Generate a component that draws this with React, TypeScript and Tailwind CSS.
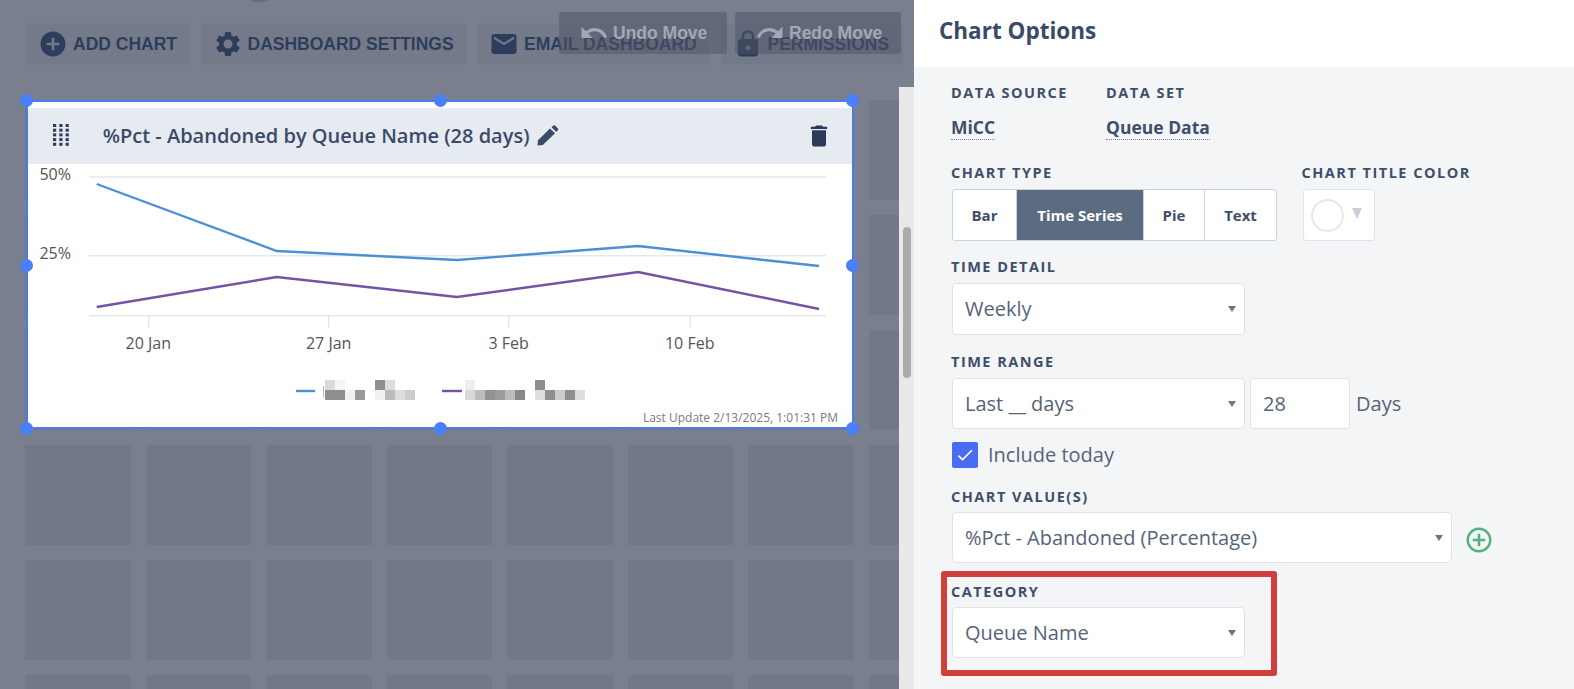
import { MdAddCircle, MdSettings, MdEmail, MdLock, MdUndo, MdRedo, MdDelete, MdCheck, MdAddCircleOutline } from 'react-icons/md';

const FONT = "font-['Open_Sans','Noto_Sans',sans-serif]";
const CELLS = Array.from({ length: 48 });

const TOOLBAR = [
  { label: 'ADD CHART', icon: MdAddCircle, width: 'w-[164px]' },
  { label: 'DASHBOARD SETTINGS', icon: MdSettings, width: 'w-[266px]' },
  { label: 'EMAIL DASHBOARD', icon: MdEmail, width: 'w-[233px]' },
  { label: 'PERMISSIONS', icon: MdLock, width: 'w-[182px]' },
];

// pixelated legend labels: x, y, colour
const LEGEND_BLOCKS: [number, number, string][] = [
  [325, 380, '#dadada'], [335, 380, '#f4f4f4'],
  [325, 390, '#8f8f8f'], [335, 390, '#8f8f8f'], [345, 390, '#f0f0f0'], [355, 390, '#999999'],
  [375, 380, '#8f8f8f'], [385, 380, '#dddddd'],
  [375, 390, '#f0f0f0'], [385, 390, '#bcbcbc'], [395, 390, '#dddddd'], [405, 390, '#cccccc'],
  [465, 380, '#eeeeee'],
  [465, 390, '#d8d8d8'], [475, 390, '#bcbcbc'], [485, 390, '#939393'], [495, 390, '#9c9c9c'], [505, 390, '#bcbcbc'], [515, 390, '#888888'],
  [535, 380, '#8f8f8f'],
  [535, 390, '#dddddd'], [545, 390, '#8f8f8f'], [555, 390, '#cccccc'], [565, 390, '#8f8f8f'], [575, 390, '#dddddd'],
];

const HANDLES = [
  'left-[-7.5px] top-[-7.5px]', 'left-[406.8px] top-[-7.5px]', 'right-[-7.5px] top-[-7.5px]',
  'left-[-7.5px] top-[157.8px]', 'right-[-7.5px] top-[157.8px]',
  'left-[-7.5px] bottom-[-7.5px]', 'left-[406.8px] bottom-[-7.5px]', 'right-[-7.5px] bottom-[-7.5px]',
];

function Label({ children }: { children: string }) {
  return <div className="-ml-[1px] text-[14.5px] leading-[20px] font-bold tracking-[1.5px] text-[#3f4f6b]">{children}</div>;
}

function Select({ value, width }: { value: string; width: string }) {
  return (
    <div className={`${width} h-[51.5px] shrink-0 flex items-center justify-between pl-[12px] pr-[8px] bg-white border border-[#dfe3e9] rounded-[4px] text-[20px] text-[#56637a]`}>
      <span>{value}</span>
      <span className="w-0 h-0 border-x-[4.5px] border-x-transparent border-t-[6px] border-t-[#6f7680]" />
    </div>
  );
}

function Segment({ label, width, active }: { label: string; width: string; active?: boolean }) {
  return (
    <div className={`${width} flex items-center justify-center text-[15px] font-bold border-r border-[#ccd2da] last:border-r-0 ${active ? 'bg-[#5b6b80] text-white' : 'text-[#3f4f6b]'}`}>
      {label}
    </div>
  );
}

function Chart() {
  return (
    <svg className="absolute left-[-27.7px] top-[-101.7px]" width="860" height="440" viewBox="0 0 860 440">
      <g stroke="#e6e7ec" strokeWidth="1.5">
        <line x1="89" y1="177" x2="826" y2="177" />
        <line x1="89" y1="255.7" x2="826" y2="255.7" />
        <line x1="89" y1="315.7" x2="826" y2="315.7" />
        <line x1="148.7" y1="316" x2="148.7" y2="328" />
        <line x1="328.7" y1="316" x2="328.7" y2="328" />
        <line x1="508.7" y1="316" x2="508.7" y2="328" />
        <line x1="690" y1="316" x2="690" y2="328" />
      </g>
      <polyline points="96.7,184 276.7,251 457,260 638,246 819,266" fill="none" stroke="#4d8fd0" strokeWidth="2.4" />
      <polyline points="96.7,307 276.7,277 457,297 638,272 819,309" fill="none" stroke="#7353a3" strokeWidth="2.4" />
      <g fontSize="16" fill="#555555" fontFamily="'Open Sans'">
        <text x="71" y="180" textAnchor="end">50%</text>
        <text x="71" y="259" textAnchor="end">25%</text>
        <text x="148.3" y="348.5" textAnchor="middle">20 Jan</text>
        <text x="328.7" y="348.5" textAnchor="middle">27 Jan</text>
        <text x="508.7" y="348.5" textAnchor="middle">3 Feb</text>
        <text x="689.7" y="348.5" textAnchor="middle">10 Feb</text>
        <text x="838" y="421.5" textAnchor="end" fontSize="12" fill="#7a7a7a">Last Update 2/13/2025, 1:01:31 PM</text>
      </g>
      <line x1="296" y1="391" x2="315" y2="391" stroke="#4d8fd0" strokeWidth="2.4" />
      <line x1="442" y1="391" x2="462" y2="391" stroke="#7353a3" strokeWidth="2.4" />
      <rect x="323" y="386" width="1" height="12" fill="#bbbbbb" />
      {LEGEND_BLOCKS.map(([x, y, fill]) => (
        <rect key={`${x}-${y}`} x={x} y={y} width="10" height="10" fill={fill} />
      ))}
    </svg>
  );
}

function ChartCard() {
  return (
    <div className="absolute left-[25.7px] top-[99.7px] w-[828px] h-[329.6px] bg-white border-2 border-[#4a7be6] pt-[6px] z-10">
      <div className="relative h-[56px] flex items-center bg-[#e6eaf1] pl-[75px] pr-[19px] text-[#3a4a68]">
        <svg className="absolute left-[25.3px] top-[16.3px]" width="16" height="22" viewBox="0 0 16 22" fill="#2f3e5c">
          {[0, 6.3, 12.6].map((x) =>
            [0, 4.7, 9.4, 14.1, 18.8].map((y) => <rect key={`${x}-${y}`} x={x} y={y} width="3.2" height="3" />)
          )}
        </svg>
        <span className="text-[20px] font-semibold whitespace-nowrap">%Pct - Abandoned by Queue Name (28 days)</span>
        <svg className="ml-[8px] shrink-0" width="22" height="21" viewBox="0 0 22 21" fill="#3a4a68">
          <path d="M0.5 20.5 L1 15.2 L13 3.6 L18 8.2 L5.8 20 Z" />
          <path d="M14.5 2.2 L16.3 0.5 Q17.2 -0.2 18 0.5 L21 3.4 Q21.6 4.2 21 5 L19.3 6.9 Z" />
        </svg>
        <MdDelete className="ml-auto text-[#2b3a5c]" size={28} />
      </div>
      <Chart />
      {HANDLES.map((pos) => (
        <span key={pos} className={`absolute ${pos} w-[13px] h-[13px] rounded-full bg-[#4a7ffa]`} />
      ))}
    </div>
  );
}

function Dashboard() {
  return (
    <div className="relative w-[914px] h-full overflow-hidden bg-[#797f8e] shrink-0">
      <div className="absolute left-[242px] top-[-28px] w-[34px] h-[30px] rounded-full bg-[#666c7c]" />
      <div className="flex gap-[10.5px] pl-[26px] pt-[23px]">
        {TOOLBAR.map(({ label, icon: Icon, width }) => (
          <div key={label} className={`${width} h-[42px] shrink-0 flex items-center gap-[5px] pl-[12px] rounded-[3px] bg-[#747a8a] text-[#2e3d5c] font-['Liberation_Sans',sans-serif] font-bold text-[17.5px] whitespace-nowrap`}>
            <Icon size={30} className="shrink-0" />
            {label}
          </div>
        ))}
      </div>
      <div className="grid grid-cols-[repeat(8,105.5px)] auto-rows-[100px] gap-x-[15px] gap-y-[15px] pl-[25px] pt-[35px]">
        {CELLS.map((_, i) => (
          <div key={i} className="bg-[#727887]" />
        ))}
      </div>
      <div className="absolute left-[559px] top-[12px] flex gap-[8.5px] font-['Liberation_Sans',sans-serif] font-bold text-[17.5px] text-[#a3a8b5]">
        <div className="w-[167.5px] h-[42px] flex items-center gap-[4.5px] pl-[19.5px] rounded-[3px] bg-[#4d5366]/50">
          <MdUndo size={30} className="shrink-0" />
          Undo Move
        </div>
        <div className="w-[166px] h-[42px] flex items-center gap-[4.5px] pl-[19.5px] rounded-[3px] bg-[#4d5366]/50">
          <MdRedo size={30} className="shrink-0" />
          Redo Move
        </div>
      </div>
      <ChartCard />
      <div className="absolute left-[899px] top-[87px] bottom-0 w-[15px] bg-[#e9e9e9]">
        <div className="absolute left-[4px] top-[140px] w-[8px] h-[151px] rounded-full bg-[#ababab]" />
      </div>
    </div>
  );
}

function OptionsPanel() {
  return (
    <div className="relative flex-1 h-full bg-[#f3f5f7] text-[#3f4f6b]">
      <div className="h-[67px] flex items-center pl-[25px] pb-[6px] bg-white text-[22.5px] font-bold text-[#3a4a68]">Chart Options</div>
      <div className="pl-[38px] pt-[16px]">
        <div className="flex">
          <div className="w-[155px]">
            <Label>DATA SOURCE</Label>
            <div className="-ml-[1px] mt-[12px] w-fit text-[17.5px] leading-[24px] font-bold border-b border-dotted border-[#7c8799]">MiCC</div>
          </div>
          <div>
            <Label>DATA SET</Label>
            <div className="-ml-[1px] mt-[12px] w-fit text-[17.5px] leading-[24px] font-bold border-b border-dotted border-[#7c8799]">Queue Data</div>
          </div>
        </div>
        <div className="flex mt-[23px]">
          <div className="w-[350.5px]">
            <Label>CHART TYPE</Label>
            <div className="flex mt-[6px] w-[325px] h-[52px] bg-white border border-[#ccd2da] rounded-[3px] overflow-hidden">
              <Segment label="Bar" width="w-[64px]" />
              <Segment label="Time Series" width="w-[127px]" active />
              <Segment label="Pie" width="w-[61px]" />
              <Segment label="Text" width="w-[71px]" />
            </div>
          </div>
          <div>
            <Label>CHART TITLE COLOR</Label>
            <div className="flex items-center gap-[8px] mt-[6px] w-[72px] h-[52px] pl-[7px] bg-white border border-[#dfe3e9] rounded-[3px]">
              <span className="w-[33px] h-[33px] rounded-full border-2 border-[#e6e8ec]" />
              <span className="w-0 h-0 mb-[4px] border-x-[5.5px] border-x-transparent border-t-[11px] border-t-[#c9ced8]" />
            </div>
          </div>
        </div>
        <div className="mt-[16px]">
          <Label>TIME DETAIL</Label>
          <div className="mt-[6px]"><Select value="Weekly" width="w-[293px]" /></div>
        </div>
        <div className="mt-[17.3px]">
          <Label>TIME RANGE</Label>
          <div className="flex items-center mt-[6px]">
            <Select value="Last __ days" width="w-[293px]" />
            <div className="w-[100px] h-[51.5px] ml-[5px] flex items-center pl-[12px] bg-white border border-[#dfe3e9] rounded-[4px] text-[20px] text-[#56637a]">28</div>
            <span className="ml-[6px] text-[20px] text-[#56637a]">Days</span>
          </div>
        </div>
        <div className="flex items-center gap-[10px] h-[26px] mt-[13.2px] text-[20px] leading-[26px] text-[#56637a]">
          <span className="w-[26px] h-[26px] flex items-center justify-center rounded-[2px] bg-[#4a6cf0] text-white"><MdCheck size={20} /></span>
          Include today
        </div>
        <div className="mt-[18.3px]">
          <Label>CHART VALUE(S)</Label>
          <div className="flex items-center mt-[5px]">
            <Select value="%Pct - Abandoned (Percentage)" width="w-[499.5px]" />
            <MdAddCircleOutline size={30} className="ml-[12.5px] mt-[4.4px] text-[#4fb37c]" />
          </div>
        </div>
        <div className="mt-[18.5px]">
          <Label>CATEGORY</Label>
          <div className="mt-[5px]"><Select value="Queue Name" width="w-[293px]" /></div>
        </div>
      </div>
      <div className="absolute left-[26.5px] top-[570.5px] w-[336px] h-[105px] border-[6.5px] border-[#cf3f3c] rounded-[3px]" />
    </div>
  );
}

export default function App() {
  return (
    <div className={`${FONT} flex w-[1574px] h-[689px] overflow-hidden`}>
      <Dashboard />
      <OptionsPanel />
    </div>
  );
}
